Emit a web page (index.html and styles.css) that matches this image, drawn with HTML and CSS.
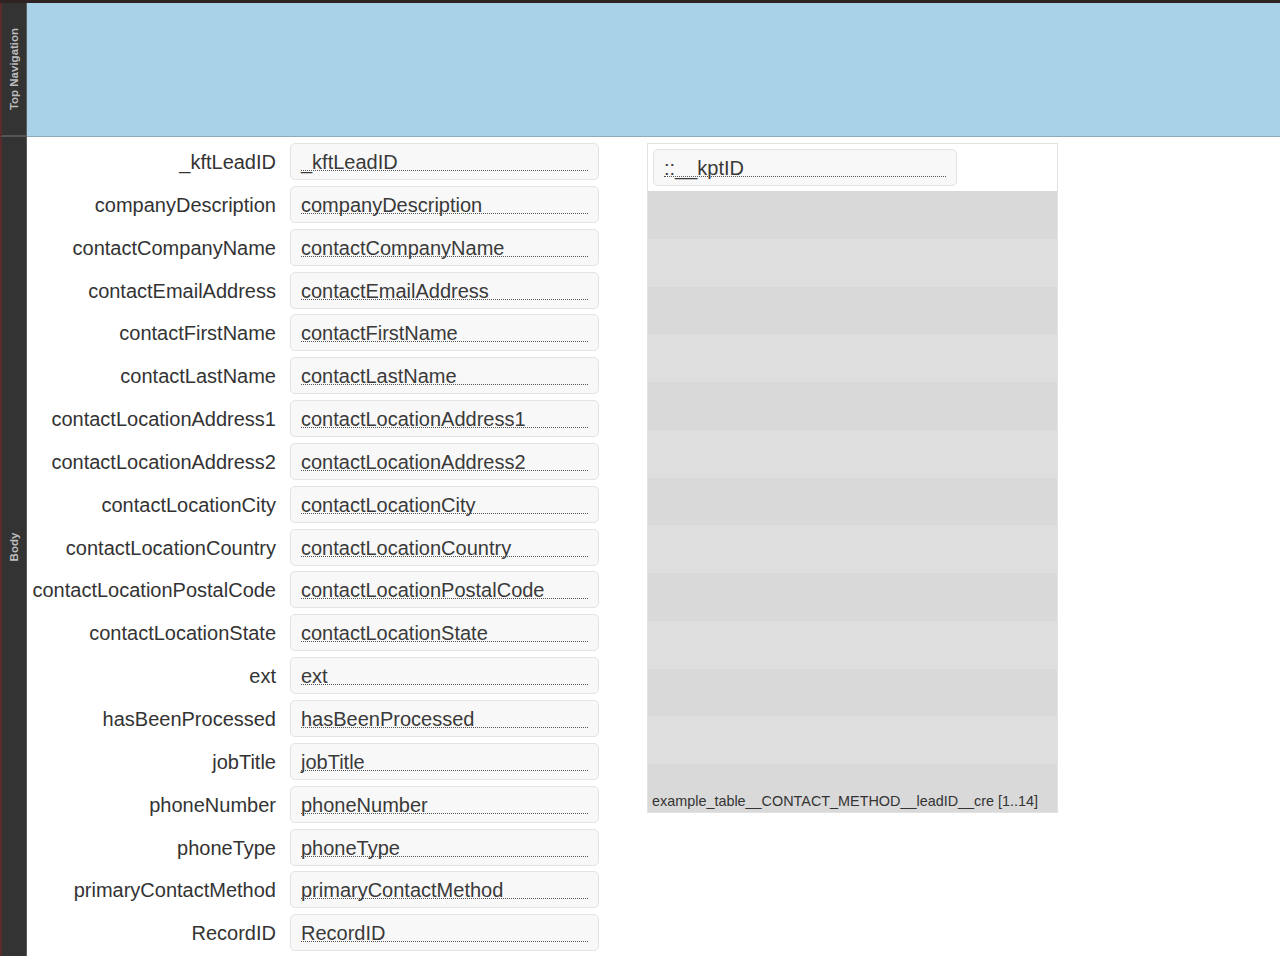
FILE: index.html
```html
<!DOCTYPE html>
<html lang="en">
<head>
    <meta charset="UTF-8">
    <title>Layout</title>
    <link rel="stylesheet" href="styles.css">
</head>
<body>
    <div class="top-edge"></div>

    <div class="part part-nav">
        <div class="part-tab"><span>Top Navigation</span></div>
        <div class="nav-band"></div>
    </div>

    <div class="part part-body">
        <div class="part-tab"><span>Body</span></div>
        <div class="body-content">
            <div class="fields">
                <div class="row"><div class="label">_kftLeadID</div><div class="field"><div class="field-text">_kftLeadID</div></div></div>
                <div class="row"><div class="label">companyDescription</div><div class="field"><div class="field-text">companyDescription</div></div></div>
                <div class="row"><div class="label">contactCompanyName</div><div class="field"><div class="field-text">contactCompanyName</div></div></div>
                <div class="row"><div class="label">contactEmailAddress</div><div class="field"><div class="field-text">contactEmailAddress</div></div></div>
                <div class="row"><div class="label">contactFirstName</div><div class="field"><div class="field-text">contactFirstName</div></div></div>
                <div class="row"><div class="label">contactLastName</div><div class="field"><div class="field-text">contactLastName</div></div></div>
                <div class="row"><div class="label">contactLocationAddress1</div><div class="field"><div class="field-text">contactLocationAddress1</div></div></div>
                <div class="row"><div class="label">contactLocationAddress2</div><div class="field"><div class="field-text">contactLocationAddress2</div></div></div>
                <div class="row"><div class="label">contactLocationCity</div><div class="field"><div class="field-text">contactLocationCity</div></div></div>
                <div class="row"><div class="label">contactLocationCountry</div><div class="field"><div class="field-text">contactLocationCountry</div></div></div>
                <div class="row"><div class="label">contactLocationPostalCode</div><div class="field"><div class="field-text">contactLocationPostalCode</div></div></div>
                <div class="row"><div class="label">contactLocationState</div><div class="field"><div class="field-text">contactLocationState</div></div></div>
                <div class="row"><div class="label">ext</div><div class="field"><div class="field-text">ext</div></div></div>
                <div class="row"><div class="label">hasBeenProcessed</div><div class="field"><div class="field-text">hasBeenProcessed</div></div></div>
                <div class="row"><div class="label">jobTitle</div><div class="field"><div class="field-text">jobTitle</div></div></div>
                <div class="row"><div class="label">phoneNumber</div><div class="field"><div class="field-text">phoneNumber</div></div></div>
                <div class="row"><div class="label">phoneType</div><div class="field"><div class="field-text">phoneType</div></div></div>
                <div class="row"><div class="label">primaryContactMethod</div><div class="field"><div class="field-text">primaryContactMethod</div></div></div>
                <div class="row"><div class="label">RecordID</div><div class="field"><div class="field-text">RecordID</div></div></div>
            </div>

            <div class="portal">
                <div class="portal-first">
                    <div class="field portal-field"><div class="field-text">::__kptID</div></div>
                </div>
                <div class="portal-row"></div>
                <div class="portal-row"></div>
                <div class="portal-row"></div>
                <div class="portal-row"></div>
                <div class="portal-row"></div>
                <div class="portal-row"></div>
                <div class="portal-row"></div>
                <div class="portal-row"></div>
                <div class="portal-row"></div>
                <div class="portal-row"></div>
                <div class="portal-row"></div>
                <div class="portal-row"></div>
                <div class="portal-row portal-last">example_table__CONTACT_METHOD__leadID__cre [1..14]</div>
            </div>
        </div>
    </div>
</body>
</html>
```

FILE: styles.css
```css
body {
    margin: 0;
    height: 956px;
    overflow: hidden;
    background: #ffffff;
    font-family: "Liberation Sans", Arial, sans-serif;
    color: #333333;
}

.top-edge {
    height: 3px;
    background: #2f2222;
}

.part {
    display: flex;
}

.part-tab {
    width: 24px;
    flex: none;
    background: #333333;
    border-left: 2px solid #5b2a2a;
    border-right: 1px solid #5c5c5c;
    border-bottom: 2px solid #555555;
    display: flex;
    align-items: center;
    justify-content: center;
}

.part-tab span {
    transform: rotate(-90deg);
    white-space: nowrap;
    font-size: 11.5px;
    font-weight: bold;
    color: #bdbdbd;
}

.part-nav {
    height: 134px;
}

.nav-band {
    flex: 1;
    height: 133px;
    background: #a9d2e8;
    border-bottom: 1px solid #8eaabb;
}

.part-body {
    height: 819px;
}

.part-body .part-tab {
    border-bottom: none;
}

.body-content {
    flex: 1;
    display: flex;
    align-items: flex-start;
    padding-top: 6px;
}

.fields {
    display: flex;
    flex-direction: column;
    gap: 5.85px;
}

.row {
    display: flex;
    align-items: flex-start;
    gap: 14px;
}

.label {
    width: 249px;
    text-align: right;
    font-size: 20px;
    line-height: 16px;
    padding-top: 11px;
    white-space: nowrap;
}

.field {
    width: 309px;
    height: 37px;
    box-sizing: border-box;
    background: #f8f8f8;
    border: 1px solid #e3e3e3;
    border-radius: 5px;
    padding: 10px 10px 0 10px;
}

.field-text {
    font-size: 20px;
    line-height: 16px;
    color: #3a3a3a;
    border-bottom: 1px dotted #555555;
    white-space: nowrap;
}

.portal {
    margin-left: 48px;
    width: 409px;
    border: 1px solid #e2e2e2;
    display: flex;
    flex-direction: column;
}

.portal-first {
    height: 47px;
    background: #ffffff;
    padding: 5px 0 0 5px;
    box-sizing: border-box;
}

.portal-field {
    width: 304px;
    height: 37px;
}

.portal-row {
    height: 47.77px;
    background: #d9d9d9;
}

.portal-row:nth-child(odd) {
    background: #dedede;
}

.portal-last {
    display: flex;
    align-items: flex-end;
    padding: 0 0 3px 4px;
    box-sizing: border-box;
    font-size: 14.4px;
    color: #333333;
}
```
